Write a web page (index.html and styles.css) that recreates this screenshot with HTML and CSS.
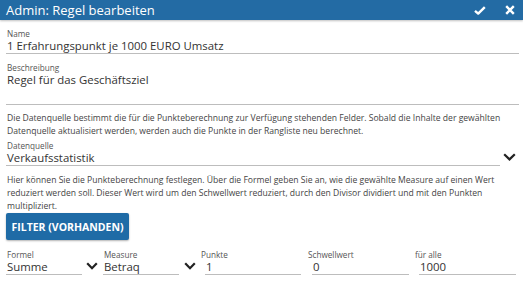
FILE: index.html
```html
<!DOCTYPE html>
<html lang="de">
<head>
<meta charset="utf-8">
<title>Admin: Regel bearbeiten</title>
<link rel="stylesheet" href="styles.css">
</head>
<body>
<header class="bar">
  <h1 class="title">Admin: Regel bearbeiten</h1>
  <div class="actions">
    <svg class="ic-check" width="12" height="9" viewBox="0 0 12 9"><path d="M1 4.8 L4.2 7.6 L10.8 1.2" fill="none" stroke="#fff" stroke-width="2.4" stroke-linejoin="round"/></svg>
    <svg class="ic-close" width="10" height="10" viewBox="0 0 10 10"><path d="M1.2 1.2 L8.8 8.8 M8.8 1.2 L1.2 8.8" fill="none" stroke="#fff" stroke-width="2.4"/></svg>
  </div>
</header>
<main class="content">
  <div class="field f-name">
    <div class="label">Name</div>
    <div class="value">1 Erfahrungspunkt je 1000 EURO Umsatz</div>
  </div>
  <div class="field f-desc">
    <div class="label">Beschreibung</div>
    <div class="value area">Regel für das Geschäftsziel</div>
  </div>
  <p class="text t1">Die Datenquelle bestimmt die für die Punkteberechnung zur Verfügung stehenden Felder. Sobald die Inhalte der gewählten Datenquelle aktualisiert werden, werden auch die Punkte in der Rangliste neu berechnet.</p>
  <div class="select-row">
    <div class="field f-source">
      <div class="label">Datenquelle</div>
      <div class="value">Verkaufsstatistik</div>
    </div>
    <svg class="chev chev-lg" width="13" height="8" viewBox="0 0 13 8"><path d="M1.2 1.2 L6.5 6.4 L11.8 1.2" fill="none" stroke="#222" stroke-width="2.2"/></svg>
  </div>
  <p class="text t2">Hier können Sie die Punkteberechnung festlegen. Über die Formel geben Sie an, wie die gewählte Measure auf einen Wert reduziert werden soll. Dieser Wert wird um den Schwellwert reduziert, durch den Divisor dividiert und mit den Punkten multipliziert.</p>
  <button class="btn" type="button">FILTER (VORHANDEN)</button>
  <div class="row">
    <div class="field f-formel">
      <div class="label">Formel</div>
      <div class="value">Summe</div>
    </div>
    <svg class="chev chev-sm c1" width="12" height="8" viewBox="0 0 12 8"><path d="M1.2 1.2 L6 6.2 L10.8 1.2" fill="none" stroke="#222" stroke-width="2.2"/></svg>
    <div class="field f-measure">
      <div class="label">Measure</div>
      <div class="value">Betraq</div>
    </div>
    <svg class="chev chev-sm c2" width="12" height="8" viewBox="0 0 12 8"><path d="M1.2 1.2 L6 6.2 L10.8 1.2" fill="none" stroke="#222" stroke-width="2.2"/></svg>
    <div class="field num n1">
      <div class="label">Punkte</div>
      <div class="value">1</div>
    </div>
    <div class="field num n2">
      <div class="label">Schwellwert</div>
      <div class="value">0</div>
    </div>
    <div class="field num n3">
      <div class="label">für alle</div>
      <div class="value">1000</div>
    </div>
  </div>
</main>
</body>
</html>
```

FILE: styles.css
```css
* { box-sizing: border-box; }
html, body { margin: 0; padding: 0; background: #fff; }
body {
  font-family: "Open Sans", "Noto Sans", "DejaVu Sans", sans-serif;
  color: #333;
  width: 523px;
  height: 289px;
  overflow: hidden;
}
.bar {
  height: 20px;
  background: #236ba4;
  display: flex;
  align-items: center;
  justify-content: space-between;
  padding: 0 8px 0 6px;
  box-shadow: 0 1px 2px rgba(0,0,0,0.25);
}
.title {
  margin: 0;
  font-weight: 400;
  font-size: 13px;
  line-height: 20px;
  color: #fff;
}
.actions { display: flex; align-items: center; gap: 19px; }
.ic-check, .ic-close { display: block; }

.content { padding: 0 4px 0 6px; }
.field { display: flex; flex-direction: column; }
.label {
  font-size: 8.2px;
  line-height: 10px;
  color: #555;
  padding-left: 1px;
}
.value {
  font-size: 11.4px;
  line-height: 14px;
  color: #333;
  border-bottom: 1px solid #bdbdbd;
  padding-left: 1px;
}
.f-name { margin-top: 9px; }
.f-desc { margin-top: 9px; }
.area { padding-bottom: 17px; }

.text {
  margin: 0;
  font-size: 8.6px;
  line-height: 13px;
  color: #444;
  padding-left: 1px;
}
.t1 { margin-top: 7px; }
.select-row { display: flex; align-items: flex-end; margin-top: 3px; }
.f-source { flex: 1; margin-right: 3px; }
.chev { display: block; flex: none; }
.chev-lg { margin-bottom: 5px; margin-right: 3px; }
.t2 { margin-top: 8px; }

.btn {
  display: block;
  margin: 0;
  height: 27px;
  width: 123px;
  padding: 0;
  border: none;
  border-radius: 2px;
  background: #1f6ba6;
  color: #fff;
  font-family: inherit;
  font-weight: 700;
  font-size: 10.5px;
  box-shadow: 0 1px 2px rgba(0,0,0,0.3);
}

.row { display: flex; align-items: flex-end; margin-top: 10px; }
.f-formel { width: 76px; }
.f-measure { width: 76px; margin-left: 5px; }
.chev-sm { margin-bottom: 5px; }
.c1 { margin-left: 4px; }
.c2 { margin-left: 5px; }
.num .value { margin-left: 5px; }
.n1 { width: 101px; margin-left: 4px; }
.n2 { width: 102px; margin-left: 6px; }
.n3 { width: 102px; margin-left: 5px; }
```
